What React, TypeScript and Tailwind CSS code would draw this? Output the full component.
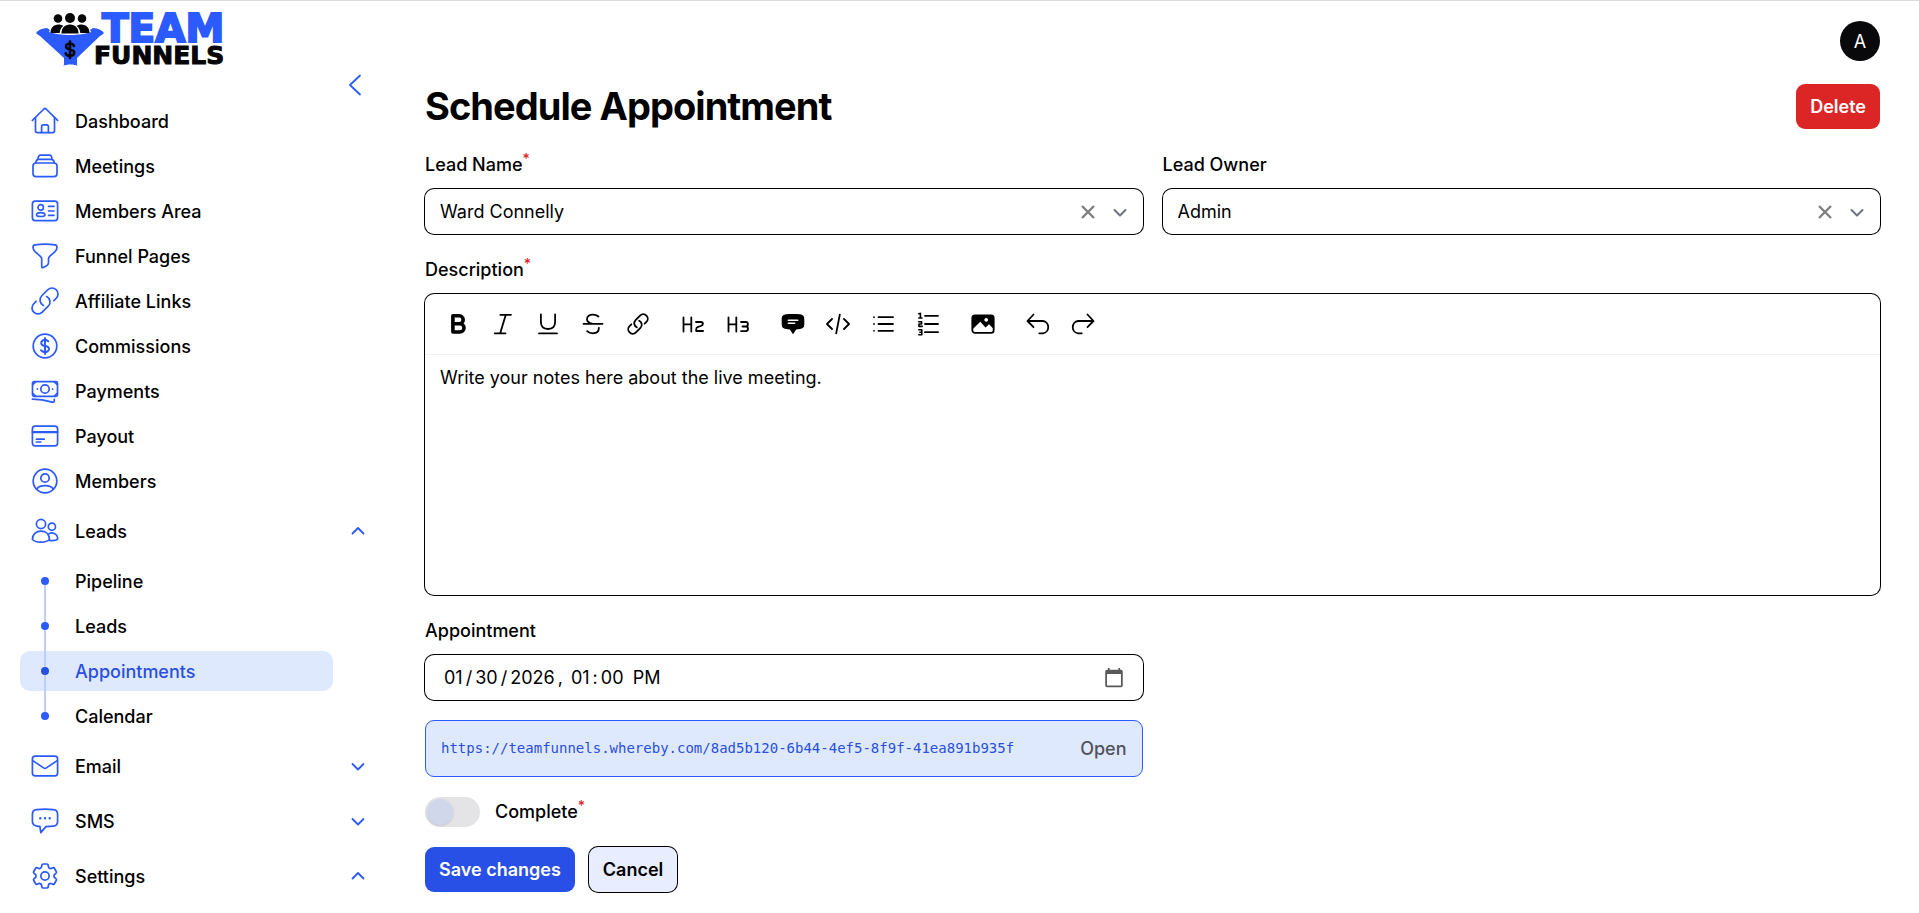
import { useState, type ReactNode } from "react";

const GEAR =
  "M9.594 3.94c.09-.542.56-.94 1.11-.94h2.593c.55 0 1.02.398 1.11.94l.213 1.281c.063.374.313.686.645.87.074.04.147.083.22.127.325.196.72.257 1.075.124l1.217-.456a1.125 1.125 0 0 1 1.37.49l1.296 2.247a1.125 1.125 0 0 1-.26 1.431l-1.003.827c-.293.241-.438.613-.43.992a7.723 7.723 0 0 1 0 .255c-.008.378.137.75.43.991l1.004.827c.424.35.534.955.26 1.43l-1.298 2.247a1.125 1.125 0 0 1-1.369.491l-1.217-.456c-.355-.133-.75-.072-1.076.124a6.47 6.47 0 0 1-.22.128c-.331.183-.581.495-.644.869l-.213 1.281c-.09.543-.56.94-1.11.94h-2.594c-.55 0-1.019-.398-1.11-.94l-.213-1.281c-.062-.374-.312-.686-.644-.87a6.52 6.52 0 0 1-.22-.127c-.325-.196-.72-.257-1.076-.124l-1.217.456a1.125 1.125 0 0 1-1.369-.49l-1.297-2.247a1.125 1.125 0 0 1 .26-1.431l1.004-.827c.292-.24.437-.613.43-.991a6.932 6.932 0 0 1 0-.255c.007-.38-.138-.751-.43-.992l-1.004-.827a1.125 1.125 0 0 1-.26-1.43l1.297-2.247a1.125 1.125 0 0 1 1.37-.491l1.216.456c.356.133.751.072 1.076-.124.072-.044.146-.086.22-.128.332-.183.582-.495.644-.869l.214-1.28Z";
const LINK =
  "M13.19 8.688a4.5 4.5 0 0 1 1.242 7.244l-4.5 4.5a4.5 4.5 0 0 1-6.364-6.364l1.757-1.757m13.35-.622 1.757-1.757a4.5 4.5 0 0 0-6.364-6.364l-4.5 4.5a4.5 4.5 0 0 0 1.242 7.244";

/** Sidebar icons share a 28px box and a thin rounded stroke. */
function NavIcon({ children }: { children: ReactNode }) {
  return (
    <svg viewBox="0 0 28 28" className="size-7 shrink-0 text-[#2b5bff]" fill="none" stroke="currentColor" strokeWidth="1.7" strokeLinecap="round" strokeLinejoin="round" aria-hidden="true">
      {children}
    </svg>
  );
}

const icons = {
  home: (
    <>
      <path d="M1.4 13.4 12.9 2Q14 1 15.1 2L26.6 13.4" />
      <path d="M4.5 10.6V23.8q0 1.8 1.8 1.8H21.7q1.8 0 1.8-1.8V10.6" />
      <path d="M10.6 25.6V19.6q0-1.8 1.8-1.8h3.2q1.8 0 1.8 1.8V25.6" />
    </>
  ),
  stack: (
    <>
      <rect x="2" y="11" width="24" height="13.6" rx="3.2" />
      <path d="M4.7 11C5 8.3 5.8 7.3 7.8 7.3H20.2C22.2 7.3 23 8.3 23.3 11" />
      <path d="M7 7.3C7.2 4.3 7.9 3.2 9.6 3.2H18.4C20.1 3.2 20.8 4.3 21 7.3" />
    </>
  ),
  idCard: (
    <>
      <rect x="1.4" y="4.2" width="25.2" height="19.4" rx="2.8" />
      <circle cx="9.7" cy="10.4" r="2.7" />
      <path d="M9.7 15.6c2.6 0 4.2 1 4.2 2.4 0 1.1-1.6 1.5-4.2 1.5s-4.2-.4-4.2-1.5c0-1.4 1.6-2.4 4.2-2.4ZM17.6 9.3H23M17.6 14H23M17.6 18.4H23" />
    </>
  ),
  funnel: (
    <path d="M2 5.2C2 3.6 2.6 3 4 2.8 10.5 1.9 17.5 1.9 24 2.8 25.4 3 26 3.6 26 5.2 26 7.2 25.4 8.3 24 9.6L18.6 14.4C17.8 15.2 17.5 15.8 17.5 17V20.6C17.5 22 17 22.7 16 23.4L12.3 25.4C11.3 25.9 10.7 25.6 10.7 24.4V17C10.7 15.8 10.2 15.2 9.4 14.4L4 9.6C2.6 8.3 2 7.2 2 5.2Z" />
  ),
  link: <path transform="translate(-2 -2) scale(1.333)" strokeWidth="1.3" d={LINK} />,
  dollar: (
    <>
      <circle cx="14" cy="14" r="11.8" />
      <path
        transform="translate(-2 -2) scale(1.333)"
        strokeWidth="1.5"
        d="M12 6v12m-3-2.818.879.659c1.171.879 3.07.879 4.242 0 1.172-.879 1.172-2.303 0-3.182C13.536 12.219 12.768 12 12 12c-.725 0-1.45-.22-2.003-.659-1.106-.879-1.106-2.303 0-3.182s2.9-.879 4.006 0l.415.33"
      />
    </>
  ),
  cash: (
    <>
      <rect x="1.5" y="4.6" width="25" height="14.8" rx="1.6" />
      <path d="M1.7 7.6 4.6 4.8M26.3 7.6 23.4 4.8M1.7 16.4l2.9 2.8M26.3 16.4l-2.9 2.8" />
      <circle cx="14" cy="12" r="4.2" />
      <path strokeWidth="1.8" d="M6.4 12h.01M21.6 12h.01" />
      <path d="M1.4 22.2c8 0 13 1 19.8 2.9 1.4.4 2.1-.1 2.1-1.3v-1.4" />
    </>
  ),
  card: (
    <>
      <rect x="1.4" y="4.2" width="25.2" height="19.6" rx="2.8" />
      <path strokeWidth="2.2" d="M1.6 10.1H26.4" />
      <path d="M5.4 17.2H13.2M5.4 20H9.8" />
    </>
  ),
  user: (
    <>
      <circle cx="14" cy="14" r="11.8" />
      <circle cx="14" cy="11" r="4.2" />
      <path d="M5.8 22.2C8 17.3 20 17.3 22.2 22.2" />
    </>
  ),
  users: (
    <>
      <circle cx="10" cy="7" r="4.6" />
      <circle cx="20.9" cy="9.7" r="3.6" />
      <path d="M10 14.2c4.9 0 8.4 3.1 8.4 8.2-2.4 3.6-14.6 3.6-17 0 0-5.1 3.7-8.2 8.600-8.200Z" />
      <path d="M17 17.600c3.800-3.400 9.700-.9 9.700 4.500-1.700 1.400-5.100 1.700-8.200 1.200" />
    </>
  ),
  mail: (
    <>
      <rect x="1.4" y="4.2" width="25.2" height="19.6" rx="2.8" />
      <path d="M1.8 8.600 12.600 15.900q1.400.9 2.800 0L26.200 8.600" />
    </>
  ),
  chat: (
    <>
      <path d="M8.900 19.400 7 19.300C2.900 18.900 1.400 17.700 1.400 14.600V7.200C1.400 4 2.700 2.900 5.700 2.600 11.200 2 16.800 2 22.300 2.600 25.300 2.900 26.600 4 26.600 7.200V14.600C26.600 17.700 25.300 18.900 22.300 19.200 19.900 19.500 17.300 19.600 14.800 19.600L9.800 25.600Z" />
      <path strokeWidth="2.4" d="M9.300 11.200h.01M14 11.200h.01M18.700 11.200h.01" />
    </>
  ),
  gear: (
    <g transform="translate(-2 -2) scale(1.333)" strokeWidth="1.3">
      <path d={GEAR} />
      <circle cx="12" cy="12" r="3.1" />
    </g>
  ),
};

function Chevron({ up = false, className }: { up?: boolean; className: string }) {
  return (
    <svg viewBox="0 0 16 16" className={className} fill="none" stroke="currentColor" strokeWidth="1.8" strokeLinecap="round" strokeLinejoin="round" aria-hidden="true">
      <path d={up ? "M2.5 10.500 8 5 13.500 10.500" : "M2.5 6 8 11.500 13.500 6"} />
    </svg>
  );
}

const mainLinks: { label: string; icon: keyof typeof icons }[] = [
  { label: "Dashboard", icon: "home" },
  { label: "Meetings", icon: "stack" },
  { label: "Members Area", icon: "idCard" },
  { label: "Funnel Pages", icon: "funnel" },
  { label: "Affiliate Links", icon: "link" },
  { label: "Commissions", icon: "dollar" },
  { label: "Payments", icon: "cash" },
  { label: "Payout", icon: "card" },
  { label: "Members", icon: "user" },
];

const leadLinks = ["Pipeline", "Leads", "Appointments", "Calendar"];

function Group({ label, icon, open = false, children }: { label: string; icon: keyof typeof icons; open?: boolean; children?: ReactNode }) {
  return (
    <li>
      <button type="button" aria-expanded={open} className="flex h-10 w-full items-center gap-4 pr-[21px] pl-[11px] text-left font-medium">
        <NavIcon>{icons[icon]}</NavIcon>
        <span className="grow">{label}</span>
        <Chevron up={open} className="size-4 text-[#2b5bff]" />
      </button>
      {children}
    </li>
  );
}

function Logo() {
  return (
    <svg viewBox="0 0 194 54" className="h-[54px] w-[194px] overflow-visible" role="img" aria-label="Team Funnels">
      <path fill="#2b5bff" d="M0 20c2-3 6-4.500 11-5l3 2-1 2c10 4 32 4 42 0l-1-2 3-2c5 .5 9 2 11 5-1 1-2 2-4 3L41 45v6c0 1 0 1 1 2-4-2-11-2-15 0 1-1 1-1 1-2v-6L4 23c-2-1-3-2-4-3Z" />
      <g fill="#050505">
        <circle cx="22" cy="5.500" r="4.300" />
        <circle cx="34" cy="5" r="5" />
        <circle cx="46" cy="5.500" r="4.300" />
        <path d="M14.500 20c0-5 3-8.500 8-8.500 2 0 3.600.5 4.800 1.500-2.300 1.600-3.300 4-3.600 7ZM53.500 20c0-5-3-8.500-8-8.500-2 0-3.600.5-4.800 1.500 2.300 1.600 3.300 4 3.600 7ZM25.500 20.500c0-5.500 3-9 8.500-9s8.500 3.500 8.500 9Z" />
      </g>
      <path fill="none" stroke="#050505" strokeWidth="2.600" strokeLinecap="round" d="M34 28.500v16.500M38 33c-.6-1.500-2-2.300-4-2.300-2.400 0-4 1-4 2.900 0 4.200 8.200 1.800 8.200 6 0 2-1.800 3.200-4.200 3.200-2.200 0-3.800-.8-4.300-2.500" />
      <text x="66" y="29" fill="#2b5bff" stroke="#2b5bff" strokeWidth="2" className="font-['DejaVu_Sans',sans-serif] text-[39px] font-bold">TEAM</text>
      <text x="58" y="51" fill="#050505" stroke="#050505" strokeWidth="1" className="font-['DejaVu_Sans',sans-serif] text-[25px] font-bold">FUNNELS</text>
    </svg>
  );
}

const tools: { name: string; art: ReactNode }[][] = [
  [
    { name: "Bold", art: <path strokeWidth="3.6" d="M6.900 3.800h6.300a4 4 0 0 1 0 8H6.900ZM6.900 11.800h7a4.100 4.100 0 0 1 0 8.200h-7Z" /> },
    { name: "Italic", art: <path d="M9.300 2.800H20M3.800 21.300H14.500M14.800 2.800 9.200 21.300" /> },
    { name: "Underline", art: <path d="M4.900 2.500V9.800c0 4.500 2.600 7.200 7.100 7.200s7.100-2.700 7.100-7.200V2.500M3 21.400H21" /> },
    { name: "Strikethrough", art: <path d="M2.500 11.800H21.500M17.500 4.500C16 3.200 14 2.600 12 2.600c-3.500 0-6 1.700-6 4.600 0 2.300 1.800 3.600 5 4.400M17.900 15.800c0 3.500-2.400 5.500-6 5.500-2.400 0-4.300-.7-5.800-2.100" /> },
    { name: "Link", art: <path d={LINK} /> },
  ],
  [
    { name: "Heading 2", art: <path d="M2.500 5.500v14M10.300 5.500v14M2.500 12.300h7.800M15 10h4.800c1.500 0 2.100.6 2.100 1.800s-.6 1.800-2 2.200l-2.900.9c-1.200.4-1.800 1.100-1.800 2.300v1.800H22.100" /> },
    { name: "Heading 3", art: <path d="M2.500 5.500v14M10.300 5.500v14M2.500 12.300h7.800M15 10h4.700c1.500 0 2.200.7 2.200 2.200s-.8 2.300-2.200 2.300h-3.200 3.200c1.500 0 2.300.8 2.300 2.300s-.8 2.300-2.300 2.300H15" /> },
  ],
  [
    {
      name: "Blockquote",
      art: (
        <>
          <path fill="currentColor" stroke="none" d="M.7 7.500C.7 4 2 2.700 5.200 2.300c4.500-.5 9.100-.5 13.600 0 3.200.4 4.500 1.700 4.500 5.200v4.600c0 3.500-1.300 4.500-4.500 4.900l-3.600.4L12 22.300l-3.200-4.900-3.600-.4C2 16.600.7 15.600.7 12.100Z" />
          <path stroke="white" strokeWidth="1.5" d="M7.300 8.200h9.400M7.300 11.200h6.400" />
        </>
      ),
    },
    { name: "Code", art: <path d="M6 7 1 12 6 17M18 7 23 12 18 17M13.800 2.600 10.200 21.400" /> },
    { name: "Bullet list", art: <path d="M7.500 5.200H22M7.500 12H22M7.500 18.800H22M3 5.200h.01M3 12h.01M3 18.800h.01" /> },
    { name: "Numbered list", art: <><path d="M9 3.800H22M9 12H22M9 20.200H22" /><path strokeWidth="1.6" d="M2.800 1.700 4.400 1.200V6M2.800 6H6M2.800 9.700h2.800v2.300H3v2.400h3.200M2.800 17.800h3v2.500H3.900h1.900v2.500h-3" /></> },
  ],
  [
    {
      name: "Image",
      art: (
        <>
          <rect x="1.300" y="3.400" width="21.400" height="17.400" rx="2.600" />
          <path fill="currentColor" stroke="none" fillRule="evenodd" d="M1.300 5.500q0-2.500 2.600-2.500H20q2.700 0 2.700 2.500V17L18 12.200l-3.500 3.300L9.300 9.800 1.300 17.500ZM15.200 6a1.900 1.900 0 1 0 .01 0Z" />
        </>
      ),
    },
  ],
  [
    { name: "Undo", art: <path d="M7.500 2.500 1.500 9l6 6.200M1.800 9H17a6 6.200 0 0 1 0 12.300H13.300" /> },
    { name: "Redo", art: <path d="M16.500 2.500 22.500 9l-6 6.200M22.200 9H7a6 6.200 0 0 0 0 12.300h3.700" /> },
  ],
];

function Star() {
  return <sup className="text-[14px] leading-none font-medium text-[#dc2626]">*</sup>;
}

function Picker({ id, label, required = false, initial }: { id: string; label: string; required?: boolean; initial: string }) {
  const [value, setValue] = useState(initial);
  return (
    <div className="flex flex-col gap-[9px]">
      <label htmlFor={id} className="h-[30px] font-medium leading-[30px]">
        {label}
        {required && <Star />}
      </label>
      <div className="flex h-[45px] items-center rounded-[9px] ring-1 ring-black">
        <select id={id} value={value} onChange={(e) => setValue(e.target.value)} className="h-full min-w-0 grow appearance-none bg-transparent pl-[15px] outline-none">
          <option value="" />
          <option value={initial}>{initial}</option>
        </select>
        <button type="button" aria-label={`Clear ${label}`} onClick={() => setValue("")} className="grid size-8 place-items-center text-[#808080]">
          <svg viewBox="0 0 16 16" className="size-4" fill="none" stroke="currentColor" strokeWidth="2.4" aria-hidden="true">
            <path d="M2 2 14 14M14 2 2 14" />
          </svg>
        </button>
        <Chevron className="mr-[15px] ml-2 size-4 stroke-2 text-[#6b7280]" />
      </div>
    </div>
  );
}

export default function App() {
  const [when, setWhen] = useState("2026-01-30T13:00");
  const [done, setDone] = useState(false);
  return (
    <div className="flex min-h-screen border-t border-[#dcdcdc] bg-white font-[Inter,sans-serif] text-[18px] leading-[25px] text-black">
      <aside className="w-[387px] shrink-0 pl-5">
        <a href="#" className="block pt-3 pl-4">
          <Logo />
        </a>
        <div className="flex justify-end pr-5">
          <button type="button" aria-label="Collapse sidebar" className="mt-[6px] text-[#2b5bff]">
            <svg viewBox="0 0 24 24" className="size-6" fill="none" stroke="currentColor" strokeWidth="1.8" strokeLinecap="round" strokeLinejoin="round" aria-hidden="true">
              <path d="M17 2.500 7 12 17 21.500" />
            </svg>
          </button>
        </div>
        <nav aria-label="Main" className="pt-1">
          <ul className="flex flex-col gap-[5px]">
            {mainLinks.map((l) => (
              <li key={l.label}>
                <a href="#" className="flex h-10 items-center gap-4 pl-[11px] font-medium">
                  <NavIcon>{icons[l.icon]}</NavIcon>
                  {l.label}
                </a>
              </li>
            ))}
          </ul>
          <ul className="flex flex-col gap-[15px] pt-[10px]">
            <Group label="Leads" icon="users" open>
              <ul className="-mb-[5px] flex flex-col gap-[5px] pt-[10px] pr-[54px]">
                {leadLinks.map((label, i) => {
                  const active = label === "Appointments";
                  return (
                    <li key={label}>
                      <a
                        href="#"
                        aria-current={active ? "page" : undefined}
                        className={`relative flex h-10 items-center gap-4 rounded-[10px] pl-[11px] font-medium ${active ? "bg-[#dfe9fe] text-[#2850e0]" : ""}`}
                      >
                        {i < leadLinks.length - 1 && <span className="absolute top-5 left-6 z-10 h-[45px] w-[2px] bg-[#becdff]" />}
                        <span className="z-20 grid w-7 place-items-center">
                          <span className={`size-2 rounded-full ${active ? "bg-[#2850e0]" : "bg-[#2b5bff]"}`} />
                        </span>
                        {label}
                      </a>
                    </li>
                  );
                })}
              </ul>
            </Group>
            <Group label="Email" icon="mail" />
            <Group label="SMS" icon="chat" />
            <Group label="Settings" icon="gear" open />
          </ul>
        </nav>
      </aside>

      <main className="flex min-w-0 grow flex-col pr-[39px] pl-[38px]">
        <header className="flex justify-end pt-5">
          <button type="button" className="grid size-10 place-items-center rounded-full bg-[#09090b] text-white">A</button>
        </header>
        <div className="mt-[23px] flex h-[45px] items-center justify-between">
          <h1 className="text-[38px] leading-[45px] font-bold tracking-tight">Schedule Appointment</h1>
          <button type="button" className="h-[45px] rounded-[9px] bg-[#dc2626] px-[14px] font-semibold text-white">Delete</button>
        </div>

        <form className="flex flex-col" onSubmit={(e) => e.preventDefault()}>
          <div className="grid grid-cols-2 gap-5 pt-[21px]">
            <Picker id="lead-name" label="Lead Name" required initial="Ward Connelly" />
            <Picker id="lead-owner" label="Lead Owner" initial="Admin" />
          </div>

          <label htmlFor="description" className="mt-[21px] mb-[9px] h-[30px] font-medium leading-[30px]">
            Description
            <Star />
          </label>
          <div className="flex flex-col rounded-[9px] ring-1 ring-black">
            <div role="toolbar" aria-label="Formatting" className="flex h-[61px] items-center gap-[15px] border-b border-[#f1f1f1] px-[13px]">
              {tools.map((group) => (
                <div key={group[0].name} className="flex gap-[5px]">
                  {group.map((tool) => (
                    <button key={tool.name} type="button" aria-label={tool.name} className="grid size-10 place-items-center">
                      <svg viewBox="0 0 24 24" className="size-6" fill="none" stroke="currentColor" strokeWidth="1.8" strokeLinecap="round" strokeLinejoin="round" aria-hidden="true">
                        {tool.art}
                      </svg>
                    </button>
                  ))}
                </div>
              ))}
            </div>
            <textarea id="description" defaultValue="Write your notes here about the live meeting." className="h-60 resize-none rounded-b-[9px] px-[15px] py-[10px] outline-none" />
          </div>

          <div className="grid grid-cols-2 gap-5 pt-[21px]">
            <div className="flex flex-col">
              <label htmlFor="appointment" className="mb-[9px] h-[30px] font-medium leading-[30px]">Appointment</label>
              <input
                id="appointment"
                type="datetime-local"
                value={when}
                onChange={(e) => setWhen(e.target.value)}
                className="h-[45px] rounded-[9px] bg-white px-4 ring-1 ring-black outline-none [&::-webkit-calendar-picker-indicator]:size-[22px] [&::-webkit-calendar-picker-indicator]:opacity-65 [&::-webkit-datetime-edit-ampm-field]:px-[3px] [&::-webkit-datetime-edit-day-field]:px-[3px] [&::-webkit-datetime-edit-hour-field]:px-[3px] [&::-webkit-datetime-edit-minute-field]:px-[3px] [&::-webkit-datetime-edit-month-field]:px-[3px] [&::-webkit-datetime-edit-year-field]:px-[3px]"
              />
              <div className="mt-5 flex h-[57px] items-center justify-between rounded-[9px] border border-[#2b5bff] bg-[#dfe9fe] px-[15px]">
                <span className="truncate font-['DejaVu_Sans_Mono',monospace] text-[14px] text-[#2850e0]">https://teamfunnels.whereby.com/8ad5b120-6b44-4ef5-8f9f-41ea891b935f</span>
                <a href="#" className="font-medium text-[#52525b]">Open</a>
              </div>
            </div>
          </div>

          <label className="mt-5 flex h-[30px] items-center gap-[15px] font-medium leading-[30px]">
            <input
              type="checkbox"
              role="switch"
              checked={done}
              onChange={(e) => setDone(e.target.checked)}
              className="h-[30px] w-[55px] appearance-none rounded-full bg-[#e4e4e7] p-[2px] before:block before:size-[26px] before:rounded-full before:bg-[#d0d7eb] before:shadow-sm checked:bg-[#2850e0] checked:before:ml-[25px]"
            />
            <span>
              Complete
              <Star />
            </span>
          </label>

          <div className="flex items-center gap-[14px] pt-5">
            <button type="submit" className="h-[45px] rounded-[9px] bg-[#2850e6] px-[14px] font-semibold text-white">Save changes</button>
            <button type="button" className="h-[45px] rounded-[9px] bg-[#e8eeff] px-[14px] font-semibold ring-1 ring-black">Cancel</button>
          </div>
        </form>
      </main>
    </div>
  );
}
